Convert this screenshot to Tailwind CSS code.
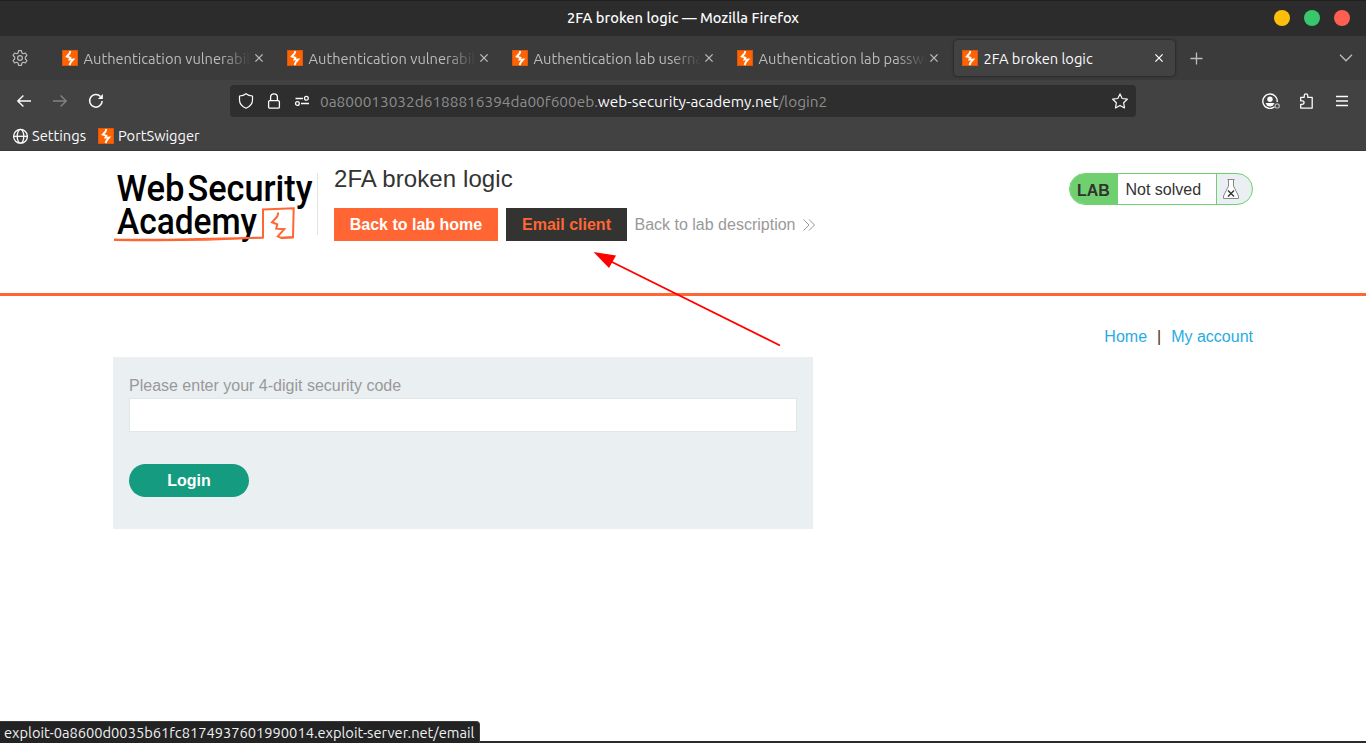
<!DOCTYPE html>
<html lang="en">
<head>
<meta charset="utf-8">
<title>2FA broken logic</title>
<script src="https://cdn.jsdelivr.net/npm/@tailwindcss/browser@4"></script>
</head>
<body class="h-[743px] w-[1366px] overflow-hidden bg-white font-['Liberation_Sans',Arial,sans-serif]">
<svg class="hidden">
  <symbol id="fav" viewBox="0 0 16 16"><rect width="16" height="16" fill="#cf5314"/><rect x=".7" y=".7" width="14.6" height="14.6" fill="#ff6200"/><path d="M8.300 .9L7.600 3.500L4.800 6.500L8.300 7.700L7.400 9.600L11.200 9.500L8.600 12.500L7.600 15.100" fill="none" stroke="#fff" stroke-width="1.900"/></symbol>
  <symbol id="x" viewBox="0 0 16 16"><path d="M4.400 4.400L11.600 11.600M11.600 4.400L4.400 11.600" fill="none" stroke="currentColor" stroke-width="1.300"/></symbol>
</svg>
<div class="flex h-full flex-col">
  <div class="font-['Ubuntu','Noto_Sans',sans-serif] text-[#fbfbfe]">
    <div class="relative flex h-9 items-center justify-center border-t border-[#202020] bg-[#2c2c2c]">
      <span class="-mt-px text-[14.667px] font-medium">2FA broken logic — Mozilla Firefox</span>
      <div class="absolute right-4 top-[9px] flex gap-[14px]">
        <i class="size-4 rounded-full bg-[#ffbe0b]"></i><i class="size-4 rounded-full bg-[#38c76a]"></i><i class="size-4 rounded-full bg-[#ff5f52]"></i>
      </div>
    </div>
    <div class="flex h-11 items-center bg-[#3b3b3b] text-[14.667px] text-[#bcbcbc]">
      <div class="flex w-[54px] pl-3">
        <svg class="size-4" viewBox="0 0 16 16" fill="none" stroke="currentColor" stroke-width="1.2" stroke-linejoin="round"><path d="M6.6 .7H9.4L9.9 2.9L11.3 3.7L13.4 3L14.9 5.5L13.3 7.1V8.9L14.9 10.5L13.4 13L11.3 12.3L9.9 13.1L9.4 15.3H6.6L6.1 13.1L4.7 12.3L2.6 13L1.1 10.5L2.7 8.9V7.1L1.1 5.5L2.6 3L4.7 3.7L6.1 2.9Z"/><circle cx="8" cy="8" r="2.4"/></svg>
      </div>
      <div class="flex gap-1">
        <div class="flex h-9 w-[221px] items-center pl-2"><svg class="size-4 shrink-0"><use href="#fav"/></svg><span class="ml-[5px] w-[168px] overflow-hidden whitespace-nowrap pl-[0.5px] pt-px [mask-image:linear-gradient(to_right,black_138px,transparent)]">Authentication vulnerabilities</span><svg class="size-4 shrink-0"><use href="#x"/></svg></div>
        <div class="flex h-9 w-[221px] items-center pl-2"><svg class="size-4 shrink-0"><use href="#fav"/></svg><span class="ml-[5px] w-[168px] overflow-hidden whitespace-nowrap pl-[0.5px] pt-px [mask-image:linear-gradient(to_right,black_138px,transparent)]">Authentication vulnerabilities</span><svg class="size-4 shrink-0"><use href="#x"/></svg></div>
        <div class="flex h-9 w-[221px] items-center pl-2"><svg class="size-4 shrink-0"><use href="#fav"/></svg><span class="ml-[5px] w-[168px] overflow-hidden whitespace-nowrap pl-[0.5px] pt-px [mask-image:linear-gradient(to_right,black_138px,transparent)]">Authentication lab usernames</span><svg class="size-4 shrink-0"><use href="#x"/></svg></div>
        <div class="flex h-9 w-[221px] items-center pl-2"><svg class="size-4 shrink-0"><use href="#fav"/></svg><span class="ml-[5px] w-[168px] overflow-hidden whitespace-nowrap pl-[0.5px] pt-px [mask-image:linear-gradient(to_right,black_138px,transparent)]">Authentication lab passwords</span><svg class="size-4 shrink-0"><use href="#x"/></svg></div>
        <div class="flex h-9 w-[221px] items-center rounded bg-[#424242] pl-2 text-[#fbfbfe] shadow-[0_0_3px_rgba(0,0,0,0.6)]"><svg class="size-4 shrink-0"><use href="#fav"/></svg><span class="ml-[5px] w-[168px] whitespace-nowrap pl-[0.5px] pt-px">2FA broken logic</span><svg class="size-4 shrink-0"><use href="#x"/></svg></div>
      </div>
      <svg class="ml-[13px] size-4" viewBox="0 0 16 16" fill="none" stroke="currentColor" stroke-width="1.3"><path d="M8.5 2.5V14.5M2.5 8.5H14.5"/></svg>
      <svg class="ml-auto mr-3 size-4" viewBox="0 0 16 16" fill="none" stroke="currentColor" stroke-width="1.3"><path d="M2 4.8L8 10.8L14 4.8"/></svg>
    </div>
    <div class="flex h-10 items-center bg-[#424242] pt-[2px]">
      <div class="flex w-[230px] gap-5 pl-4">
        <svg class="size-4" viewBox="0 0 16 16" fill="none" stroke="currentColor" stroke-width="1.4"><path d="M15 8H1.8M7.4 2.4L1.8 8L7.4 13.6"/></svg>
        <svg class="size-4 text-[#828282]" viewBox="0 0 16 16" fill="none" stroke="currentColor" stroke-width="1.4"><path d="M1 8H14.2M8.6 2.4L14.2 8L8.6 13.6"/></svg>
        <svg class="size-4" viewBox="0 0 16 16" fill="none" stroke="currentColor" stroke-width="1.5"><path d="M14.2 8A6.3 6.3 0 1 1 12.5 3.5"/><path d="M14.9 1V5.6Q14.9 6 14.5 6H9.9Z" fill="currentColor" stroke="none"/></svg>
      </div>
      <div class="flex h-8 w-[906px] items-center rounded bg-[#2e2e2e] px-2">
        <svg class="size-4" viewBox="0 0 16 16" fill="none" stroke="currentColor" stroke-width="1.2" stroke-linejoin="round"><path d="M8 .7C6.2 2.2 4 2.9 1.500 3V7C1.500 11 4.500 13.800 8 15.300C11.500 13.800 14.500 11 14.500 7V3C12 2.900 9.800 2.200 8 .7Z"/></svg>
        <svg class="ml-3 size-4" viewBox="0 0 16 16" fill="none" stroke="currentColor" stroke-width="1.3"><rect x="2.6" y="7.6" width="10.8" height="7.6" rx="1.2"/><path d="M4.600 7.500V4.200A3.400 3.400 0 0 1 11.400 4.200V7.500"/></svg>
        <svg class="ml-3 size-4" viewBox="0 0 16 16" fill="none" stroke="currentColor" stroke-width="1.3"><path d="M1.500 5.500H9M7 10.500H15"/><circle cx="12.400" cy="5.300" r="1.900"/><circle cx="3.400" cy="10.500" r="1.900"/></svg>
        <span class="ml-[10px] whitespace-nowrap pt-px text-[15.4px] text-[#8d8d8d]">0a800013032d6188816394da00f600eb.<span class="text-[#fbfbfe]">web-security-academy.net</span>/login2</span>
        <svg class="ml-auto size-4" viewBox="0 0 16 16" fill="none" stroke="currentColor" stroke-width="1.200" stroke-linejoin="round"><path d="M8 .9L10.200 5.500L15.300 6.200L11.600 9.700L12.500 14.900L8 12.400L3.500 14.900L4.400 9.700L.7 6.200L5.800 5.500Z"/></svg>
      </div>
      <svg class="ml-[126px] h-4 w-[18px]" viewBox="0 0 18 16" fill="none" stroke="currentColor" stroke-width="1.400"><path d="M12.600 13.800A7.200 7.200 0 1 1 15.200 9"/><circle cx="8" cy="6.200" r="2.700" fill="currentColor" stroke="none"/><path d="M3.500 10H12.500L10.800 12.800Q8 14.200 5.200 12.800Z" fill="currentColor" stroke="none"/><circle cx="15.200" cy="12.900" r="2.100" stroke="#b5b5b5" stroke-width="1.200"/></svg>
      <svg class="ml-[18px] size-4" viewBox="0 0 16 16" fill="none" stroke="currentColor" stroke-width="1.300" stroke-linejoin="round"><path d="M2.700 4.500H6.200V2.900A1.800 1.800 0 0 1 9.800 2.900V4.500H14.200V15.300H2.700V11.500H4.300A1.700 1.700 0 0 0 4.300 8H2.700Z" transform="translate(0 -.2)"/></svg>
      <svg class="ml-5 size-4" viewBox="0 0 16 16" stroke="currentColor" stroke-width="1.300"><path d="M2 3.500H14M2 8H14M2 12.500H14"/></svg>
    </div>
    <div class="flex h-[31px] items-center border-b border-[#383838] bg-[#424242] pl-3 text-[14.667px]">
      <svg class="mt-px size-4" viewBox="0 0 16 16" fill="none" stroke="currentColor" stroke-width="1.300"><circle cx="8.500" cy="8.300" r="6.900"/><ellipse cx="8.500" cy="8.300" rx="3.300" ry="6.900"/><path d="M1.600 8.300H15.400"/></svg>
      <span class="ml-1 w-[66px] pt-px">Settings</span>
      <svg class="mt-px size-4"><use href="#fav"/></svg>
      <span class="ml-1 pt-px">PortSwigger</span>
    </div>
  </div>

  <div class="relative grow text-[16px] text-[#333332]">
    <header class="h-[145px] border-b-[3px] border-[#ff6633]">
      <div class="mx-auto flex w-[1140px] items-start pt-[22px]">
        <svg class="h-[72px] w-[204px]" viewBox="113 173 204 72">
          <g font-family="Roboto, sans-serif" font-weight="500" font-size="37.500" fill="#000">
            <text x="116.500" y="201" textLength="68" lengthAdjust="spacingAndGlyphs">Web</text>
            <text x="187.500" y="201" textLength="125" lengthAdjust="spacingAndGlyphs">Security</text>
            <text x="117" y="234" textLength="140" lengthAdjust="spacingAndGlyphs">Academy</text>
          </g>
          <path d="M114 239.500C150 240.800 205 238.500 263 237.500V209.500L293.700 208.300L293 237.200L281 238" fill="none" stroke="#ff6633" stroke-width="2"/>
          <path d="M114 240.300Q190 241.800 263 237.800" fill="none" stroke="#ff6633" stroke-width="1.200"/>
          <path d="M278.300 212.500L277.300 216.500L272 222.300L277.300 224.300L276.200 228.700L284.300 229.200L277.800 236.300L281 237.800L293 237.200" fill="none" stroke="#ff6633" stroke-width="2"/>
        </svg>
        <div class="h-[62px] w-px bg-[#e3e3e3]"></div>
        <div class="ml-4">
          <h2 class="-mt-2 h-[43px] text-[24px] leading-[27px] tracking-[0.08px]">2FA broken logic</h2>
          <div class="flex h-[33px] items-center">
            <a class="flex h-[33px] w-[164px] items-center justify-center bg-[#ff6633] font-bold text-white">Back to lab home</a>
            <a class="ml-2 flex h-[33px] w-[121px] items-center justify-center bg-[#333332] font-bold text-[#ff6633]">Email client</a>
            <a class="ml-[7.5px] whitespace-nowrap text-[#999]">Back to lab description</a>
            <svg class="ml-[8px] h-3 w-3" viewBox="0 0 12 12" fill="none" stroke="#999"><path d="M.5 .5L6 6L.5 11.500M6 .5L11.500 6L6 11.500"/></svg>
          </div>
        </div>
        <div class="ml-auto flex h-8 w-[184px] overflow-hidden rounded-full border border-[#70d070] bg-[#e9eff2]">
          <div class="flex w-12 items-center bg-[#70d070] pl-[7px] pt-[3px] font-bold">LAB</div>
          <div class="w-[99px] border-r border-[#70d070] bg-white pl-[7.500px] leading-[31px]">Not solved</div>
          <svg class="ml-[6px] mt-[5px] h-5 w-4" viewBox="0 0 16 20" fill="#fff" stroke="#888"><path d="M5.500 .5V7L.5 17V19.500H15.500V17L10.500 7V.5Z"/><path d="M4.500 .5H11.500"/><path d="M5 11.500L11 17.500M11 11.500L5 17.500" stroke="#333" stroke-width="1.400"/></svg>
        </div>
      </div>
    </header>
    <div class="mx-auto w-[1140px]">
      <nav class="flex h-[61px] items-center justify-end pt-5 text-[#29abe2]"><a>Home</a><span class="mx-[10px] text-[#4a2a08]">|</span><a>My account</a></nav>
      <form class="h-[172px] w-[700px] bg-[#eaeff2] px-4 pt-4">
        <label class="block h-[25px] leading-[25px] text-[#999]">Please enter your 4-digit security code</label>
        <input class="block h-[34px] w-full border border-[#e3e6e6] bg-white">
        <button type="button" class="mt-8 block h-[33px] w-[120px] rounded-full bg-[#159b80] font-bold text-white">Login</button>
      </form>
    </div>
    <svg class="absolute left-[590px] top-[97px] h-[102px] w-[196px]" viewBox="590 248 196 102"><path d="M780 345.500L610 261" stroke="#f00" stroke-width="1.800"/><path d="M593.500 252L616 255.500L609 268Z" fill="#f00"/></svg>
    <div class="absolute bottom-0 left-0 h-[2px] w-full bg-[#2b2b2e]"></div>
    <div class="absolute bottom-0 left-0 h-[22px] w-[480px] whitespace-nowrap rounded-tr border-r border-t border-[#3a3a3a] bg-[#232323] pl-1 font-['Ubuntu','Noto_Sans',sans-serif] text-[14.667px] leading-[22px] text-[#f0f0f2]">exploit-0a8600d0035b61fc8174937601990014.exploit-server.net/email</div>
  </div>
</div>
</body>
</html>
